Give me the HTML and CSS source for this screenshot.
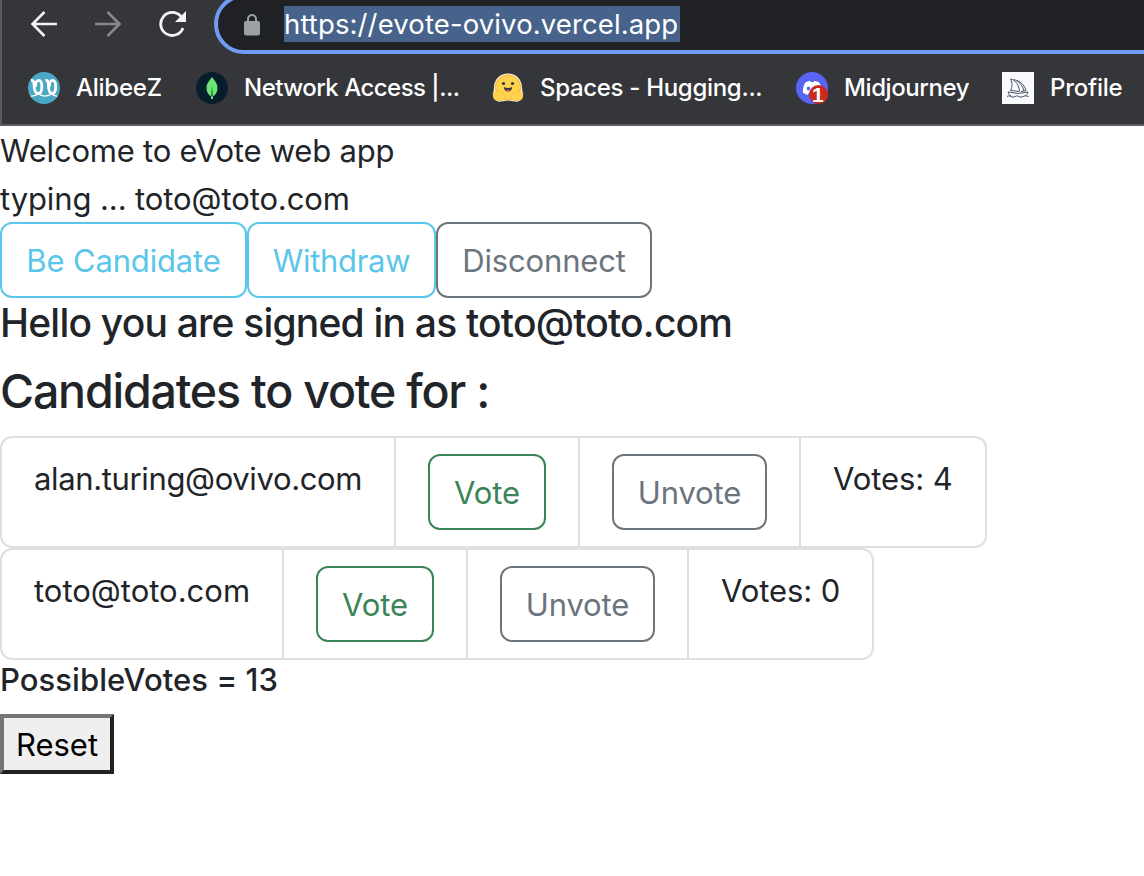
FILE: index.html
```html
<!DOCTYPE html>
<html lang="en">
<head>
<meta charset="utf-8">
<title>eVote</title>
<link rel="stylesheet" href="styles.css">
</head>
<body>
<header class="browser">
  <div class="toolbar">
    <svg class="nav-icon" width="28" height="28" viewBox="0 0 28 28"><path d="M27 14H3M14.500 2l-12 12 12 12" fill="none" stroke="#f1f3f4" stroke-width="2.600"/></svg>
    <svg class="nav-icon" width="28" height="28" viewBox="0 0 28 28"><path d="M1 14h24M13.500 2l12 12-12 12" fill="none" stroke="#87888a" stroke-width="2.600"/></svg>
    <svg class="nav-icon" width="28" height="28" viewBox="0 0 28 28"><path d="M23 6.500A11.500 11.500 0 1 0 25 18" fill="none" stroke="#f1f3f4" stroke-width="2.800"/><path d="M28 1v11H17z" fill="#f1f3f4"/></svg>
    <div class="address">
      <svg width="16" height="22" viewBox="0 0 16 22"><path d="M4 8V5a4 4 0 0 1 8 0v3" fill="none" stroke="#9aa0a6" stroke-width="2"/><rect y="7" width="16" height="14.500" rx="2" fill="#9aa0a6"/></svg>
      <span class="url">https://evote-ovivo.vercel.app</span>
    </div>
  </div>
  <nav class="bookmarks">
    <a class="bookmark bm-alibeez"><svg width="32" height="32" viewBox="0 0 32 32"><circle cx="16" cy="16" r="16" fill="#4ba8c5"/><g fill="none" stroke="#fff"><path d="M3 8.500C6.500 8 6 12 6.200 15c.3 4 1.800 6.500 4 6.500 2.600 0 3.600-3.500 3.600-7 0-4-1-6.200-3.200-6.200-2.400 0-3.300 3-3 6.500M17.500 8.500c3.500-.5 2.800 3.500 3 6.500.3 4 1.500 6.500 3.600 6.500 2.600 0 3.600-3.500 3.600-7 0-4-1-6.200-3.200-6.200-2.400 0-3.300 3-3 6.500" stroke-width="2.800"/><path d="M2.500 24c3.500.3 6-.5 8-2.500 3.500 3.500 9.500 3.500 13 0 2 2 3.500 2.800 6 2.500" stroke-width="1.200"/></g></svg><span>AlibeeZ</span></a>
    <a class="bookmark bm-network"><svg width="32" height="32" viewBox="0 0 32 32"><circle cx="16" cy="16" r="16" fill="#061e2b"/><path d="M16 5c2 3 5.500 6 5.500 11 0 4-2 7-4.500 8.500V27h-2v-2.500c-2.500-1.500-4.500-4.500-4.500-8.500C10.500 11 14 8 16 5z" fill="#6be675"/><path d="M16 13l1 11.500h-2z" fill="#187a3b"/></svg><span>Network Access |...</span></a>
    <a class="bookmark bm-spaces"><svg width="32" height="32" viewBox="0 0 32 32"><path d="M16 1.500c8 0 14 6 14 14 0 2 .5 4 1 6 1 5-3 9-8 8-3-.2-4-1-7-1s-4 .8-7 1C4 30.500 0 26.500 1 21.500c.5-2 1-4 1-6 0-8 6-14 14-14z" fill="#fff3df"/><circle cx="16" cy="15.500" r="12.600" fill="#ffd34e" stroke="#f8ae32"/><circle cx="11.500" cy="11.500" r="1.600" fill="#333742"/><circle cx="20.500" cy="11.500" r="1.600" fill="#333742"/><path d="M11.800 15c3 1.300 5.500 1.300 8.400 0-.3 3-1.800 4.500-4.200 4.500s-3.900-1.500-4.200-4.500z" fill="#333742"/><path d="M13.500 18.500q2.500-1.500 5 0-2.500 2-5 0" fill="#ef4e4e"/><path d="M2.500 20l2 1 1-2.500 3 2.500 2-1.500 2 4c1 3-1 5-4 5-4 0-7-1-7-4.500zM29.500 20l-2 1-1-2.500-3 2.500-2-1.500-2 4c-1 3 1 5 4 5 4 0 7-1 7-4.500z" fill="#ffd34e" stroke="#f8bc3c" stroke-width=".8" stroke-linejoin="round"/></svg><span>Spaces - Hugging...</span></a>
    <a class="bookmark bm-mid"><svg width="32" height="32" viewBox="0 0 32 32"><circle cx="16" cy="16" r="16" fill="#5865f2"/><path d="M9.500 10.200l4.500-1.500.8 1.300h3l.8-1.300 4.400 1.500c2 3 3 6.500 2.700 10.500l-4.200 2.300-1-1.800h-8l-1.200 1.800L7 20.700c-.5-4 .5-7.500 2.500-10.500z" fill="#fff"/><ellipse cx="12.500" cy="16.500" rx="1.700" ry="2" fill="#5865f2"/><circle cx="22.500" cy="22.500" r="9.500" fill="#cc2a20"/><text class="badge-text" x="21.800" y="29.500" text-anchor="middle">1</text></svg><span>Midjourney</span></a>
    <a class="bookmark bm-profile"><svg width="32" height="32" viewBox="0 0 32 32"><path fill="#f9fafd" d="M0 0h32v32H0z"/><g fill="none" stroke="#3b4258" stroke-width=".9"><path d="M8.500 7c5 1 8.500 6 9 12.500l-9-1C10.500 15 10.500 11 8.500 7zM11.500 7.500c5 1 9 5.500 10.500 11.500l-3 .5M15 8.500c5 2 8 6 9 10l-2 .5M6 20l10 1.500 10-1.500c-.5 2-1.500 3-3 4M6 20c.5 2 1.500 3 3 4M5 24.500q2-1.500 4 0t4 0 4 0 4 0 5.500 0"/></g></svg><span>Profile</span></a>
  </nav>
</header>
<main class="page">
  <div class="line t-welcome">Welcome to eVote web app</div>
  <div class="line t-typing">typing ... toto@toto.com</div>
  <div class="actions">
    <button class="btn info w-be">Be Candidate</button>
    <button class="btn info w-with">Withdraw</button>
    <button class="btn secondary w-dis">Disconnect</button>
  </div>
  <h5 class="signed">Hello you are signed in as toto@toto.com</h5>
  <h4 class="heading">Candidates to vote for :</h4>
  <ul class="list">
    <li class="cell name-alan">alan.turing@ovivo.com</li>
    <li class="cell vote-cell"><button class="btn success">Vote</button></li>
    <li class="cell unvote-cell"><button class="btn secondary">Unvote</button></li>
    <li class="cell count">Votes: 4</li>
  </ul>
  <ul class="list">
    <li class="cell name-toto">toto@toto.com</li>
    <li class="cell vote-cell"><button class="btn success">Vote</button></li>
    <li class="cell unvote-cell"><button class="btn secondary">Unvote</button></li>
    <li class="cell count count-short">Votes: 0</li>
  </ul>
  <h6 class="possible">PossibleVotes = 13</h6>
  <button class="reset">Reset</button>
</main>
</body>
</html>
```

FILE: styles.css
```css
* { box-sizing: border-box; }
body { margin: 0; background: #fff; color: #212529; font: 400 31px/48px Inter, sans-serif; overflow: hidden; }
.browser { height: 126px; background: #35363a; border-bottom: 2px solid #5b5c60; border-left: 2px solid #5b5c60; color: #fff; overflow: hidden; }
.toolbar { display: flex; height: 54px; padding-left: 28px; }
.nav-icon { margin: 10px 36px 0 0; flex: none; }
.address { display: flex; flex: 1; align-items: flex-start; margin: -6px -40px 0 -8px; height: 60px; padding: 16px 0 0 26px; border: 4px solid #709bf0; border-radius: 30px; background: #202124; }
.address svg { flex: none; }
.url { margin: -8px 0 0 24px; height: 36px; line-height: 36px; width: 396px; font-size: 27.5px; letter-spacing: 0.12px; background: #48638b; white-space: nowrap; }
.bookmarks { display: flex; height: 68px; font-size: 24px; font-weight: 500; padding-left: 26px; letter-spacing: -0.25px; }
.bookmark { display: flex; align-items: center; gap: 16px; flex: none; white-space: nowrap; }
.bm-alibeez { width: 168px; }
.bm-network { width: 296px; letter-spacing: -0.52px; }
.bm-spaces { width: 304px; letter-spacing: -0.31px; }
.bm-mid { width: 206px; letter-spacing: -0.4px; }
.badge-text { font: 700 21px "Liberation Sans", sans-serif; letter-spacing: 0; fill: #fff; }
.line { height: 48px; padding-top: 1px; white-space: nowrap; }
.t-welcome { letter-spacing: -0.22px; }
.t-typing { letter-spacing: -0.1px; }
.actions, .list { display: flex; }
.btn { height: 76px; padding: 2px 0 0; border: 2px solid; border-radius: 12px; background: #fff; font: inherit; white-space: nowrap; }
.info { color: #5bc6e9; }
.secondary { color: #6c757d; }
.success { color: #3a8557; }
.w-be { width: 247px; letter-spacing: -0.15px; }
.w-with { width: 189px; letter-spacing: -0.3px; }
.w-dis { width: 216px; letter-spacing: -0.15px; }
h4, h5, h6 { font-weight: 500; white-space: nowrap; }
.signed { margin: 0 0 15px; padding-top: 1px; font-size: 39px; line-height: 48px; letter-spacing: -0.8px; }
.heading { margin: 0 0 16px; font-size: 46.5px; line-height: 58px; letter-spacing: -1.2px; }
.list { margin: 0; padding: 0; list-style: none; height: 112px; }
.cell { border: 2px solid #dfdfdf; border-left-width: 0; padding: 17px 32px 15px; white-space: nowrap; }
.cell:first-child { border-left-width: 2px; border-radius: 12px 0 0 12px; }
.cell:last-child { border-radius: 0 12px 12px 0; }
.name-alan { width: 396px; letter-spacing: -0.36px; }
.name-toto { width: 284px; }
.vote-cell { width: 184px; padding-top: 16px; }
.unvote-cell { width: 221px; padding-top: 16px; }
.count { width: 186px; letter-spacing: -0.1px; }
.count-short { width: 185px; }
.cell .btn { display: block; width: 100%; letter-spacing: -0.1px; }
.possible { margin: 0 0 15px; padding-top: 1px; font-size: 31px; line-height: 38px; letter-spacing: 0.06px; }
.reset { display: block; width: 114px; height: 60px; padding: 2px 0 0; border: 4px outset #767676; background: #efefef; color: #000; font: inherit; }
```
